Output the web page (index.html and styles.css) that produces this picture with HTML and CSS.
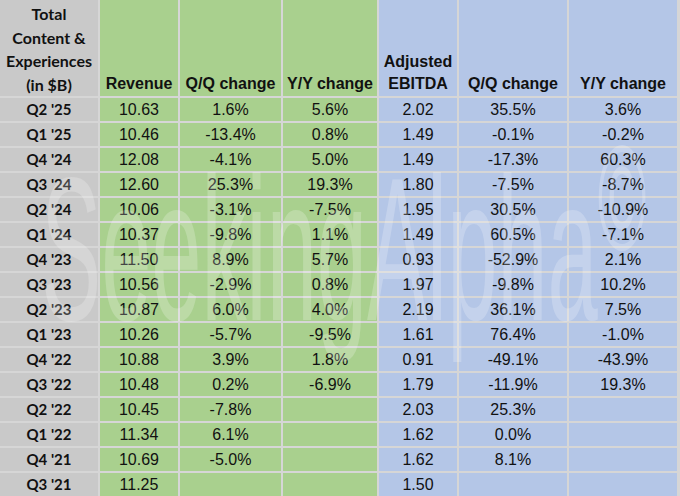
FILE: index.html
```html
<!DOCTYPE html>
<html lang="en">
<head>
<meta charset="utf-8">
<title>Total Content &amp; Experiences</title>
<link rel="stylesheet" href="styles.css">
</head>
<body>
<div class="sheet">
  <div class="grid">
    <div class="hd label">Total<br>Content &amp;<br>Experiences<br>(in $B)</div>
    <div class="hd g">Revenue</div>
    <div class="hd g">Q/Q change</div>
    <div class="hd g">Y/Y change</div>
    <div class="hd b">Adjusted<br>EBITDA</div>
    <div class="hd b">Q/Q change</div>
    <div class="hd b">Y/Y change</div>

    <div class="q">Q2 '25</div><div class="c g">10.63</div><div class="c g">1.6%</div><div class="c g">5.6%</div><div class="c b">2.02</div><div class="c b">35.5%</div><div class="c b">3.6%</div>
    <div class="q">Q1 '25</div><div class="c g">10.46</div><div class="c g">-13.4%</div><div class="c g">0.8%</div><div class="c b">1.49</div><div class="c b">-0.1%</div><div class="c b">-0.2%</div>
    <div class="q">Q4 '24</div><div class="c g">12.08</div><div class="c g">-4.1%</div><div class="c g">5.0%</div><div class="c b">1.49</div><div class="c b">-17.3%</div><div class="c b">60.3%</div>
    <div class="q">Q3 '24</div><div class="c g">12.60</div><div class="c g">25.3%</div><div class="c g">19.3%</div><div class="c b">1.80</div><div class="c b">-7.5%</div><div class="c b">-8.7%</div>
    <div class="q">Q2 '24</div><div class="c g">10.06</div><div class="c g">-3.1%</div><div class="c g">-7.5%</div><div class="c b">1.95</div><div class="c b">30.5%</div><div class="c b">-10.9%</div>
    <div class="q">Q1 '24</div><div class="c g">10.37</div><div class="c g">-9.8%</div><div class="c g">1.1%</div><div class="c b">1.49</div><div class="c b">60.5%</div><div class="c b">-7.1%</div>
    <div class="q">Q4 '23</div><div class="c g">11.50</div><div class="c g">8.9%</div><div class="c g">5.7%</div><div class="c b">0.93</div><div class="c b">-52.9%</div><div class="c b">2.1%</div>
    <div class="q">Q3 '23</div><div class="c g">10.56</div><div class="c g">-2.9%</div><div class="c g">0.8%</div><div class="c b">1.97</div><div class="c b">-9.8%</div><div class="c b">10.2%</div>
    <div class="q">Q2 '23</div><div class="c g">10.87</div><div class="c g">6.0%</div><div class="c g">4.0%</div><div class="c b">2.19</div><div class="c b">36.1%</div><div class="c b">7.5%</div>
    <div class="q">Q1 '23</div><div class="c g">10.26</div><div class="c g">-5.7%</div><div class="c g">-9.5%</div><div class="c b">1.61</div><div class="c b">76.4%</div><div class="c b">-1.0%</div>
    <div class="q">Q4 '22</div><div class="c g">10.88</div><div class="c g">3.9%</div><div class="c g">1.8%</div><div class="c b">0.91</div><div class="c b">-49.1%</div><div class="c b">-43.9%</div>
    <div class="q">Q3 '22</div><div class="c g">10.48</div><div class="c g">0.2%</div><div class="c g">-6.9%</div><div class="c b">1.79</div><div class="c b">-11.9%</div><div class="c b">19.3%</div>
    <div class="q">Q2 '22</div><div class="c g">10.45</div><div class="c g">-7.8%</div><div class="c g"></div><div class="c b">2.03</div><div class="c b">25.3%</div><div class="c b"></div>
    <div class="q">Q1 '22</div><div class="c g">11.34</div><div class="c g">6.1%</div><div class="c g"></div><div class="c b">1.62</div><div class="c b">0.0%</div><div class="c b"></div>
    <div class="q">Q4 '21</div><div class="c g">10.69</div><div class="c g">-5.0%</div><div class="c g"></div><div class="c b">1.62</div><div class="c b">8.1%</div><div class="c b"></div>
    <div class="q">Q3 '21</div><div class="c g">11.25</div><div class="c g"></div><div class="c g"></div><div class="c b">1.50</div><div class="c b"></div><div class="c b"></div>
  </div>
  <div class="watermark" aria-hidden="true">SeekingAlpha<span class="copy">©</span></div>
</div>
</body>
</html>
```
FILE: styles.css
```css
html, body {
  margin: 0;
  padding: 0;
}
body {
  background: #d6d6d6;
  overflow: hidden;
  width: 680px;
  height: 496px;
}
.sheet {
  position: relative;
  width: 680px;
  height: 496px;
  overflow: hidden;
}
.grid {
  display: grid;
  grid-template-columns: 98px 78px 101px 94px 78px 108px 108px;
  grid-template-rows: 96px repeat(16, 23px);
  gap: 2px;
  padding-right: 2px;
  width: max-content;
  background: #d6d6d6;
  font-family: "Liberation Sans", Arial, sans-serif;
  font-size: 16px;
  color: #111;
}
.g { background: #a9d08e; }
.b { background: #b4c6e7; }
.hd {
  display: flex;
  align-items: flex-end;
  justify-content: center;
  text-align: center;
  font-weight: bold;
  line-height: 22px;
  padding-bottom: 1px;
}
.hd.label {
  background: #c9c9c9;
  font-family: Lato, "Liberation Sans", sans-serif;
  font-size: 16px;
  line-height: 23.5px;
  padding-bottom: 0;
}
.q {
  background: #c9c9c9;
  font-family: Lato, "Liberation Sans", sans-serif;
  font-weight: bold;
  font-size: 15px;
  line-height: 23px;
  text-align: center;
}
.c {
  line-height: 23px;
  text-align: center;
}
.watermark {
  position: absolute;
  left: 41px;
  top: 146px;
  font-family: "Liberation Sans", Arial, sans-serif;
  font-size: 205px;
  line-height: 1;
  white-space: nowrap;
  color: rgba(255, 255, 255, 0.22);
  transform-origin: left top;
  transform: scaleX(0.44);
  pointer-events: none;
}
.copy {
  font-size: 150px;
  position: relative;
  top: -70px;
}
```
